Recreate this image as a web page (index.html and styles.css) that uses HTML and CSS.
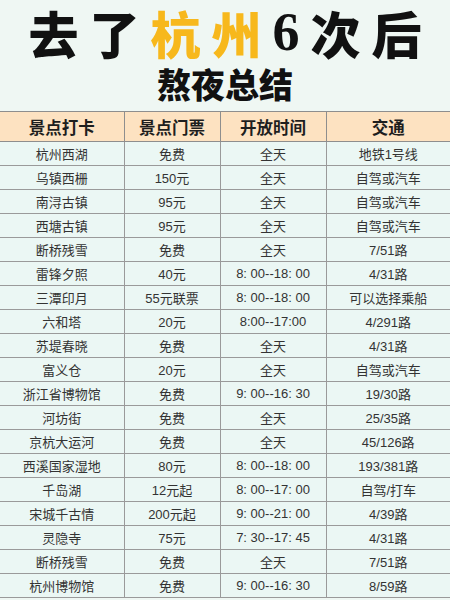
FILE: index.html
```html
<!DOCTYPE html>
<html lang="zh">
<head>
<meta charset="utf-8">
<link rel="stylesheet" href="styles.css">
</head>
<body>
<div class="page">
  <header class="title">
    <h1 class="line1"><span>去</span><span>了</span><span class="hl">杭</span><span class="hl">州</span><span class="num">6</span><span>次</span><span>后</span></h1>
    <h2 class="line2">熬夜总结</h2>
  </header>
  <table class="grid">
    <colgroup>
      <col class="c1"><col class="c2"><col class="c3"><col class="c4">
    </colgroup>
    <thead>
      <tr><th>景点打卡</th><th>景点门票</th><th>开放时间</th><th>交通</th></tr>
    </thead>
    <tbody>
      <tr><td>杭州西湖</td><td>免费</td><td>全天</td><td>地铁1号线</td></tr>
      <tr><td>乌镇西栅</td><td>150元</td><td>全天</td><td>自驾或汽车</td></tr>
      <tr><td>南浔古镇</td><td>95元</td><td>全天</td><td>自驾或汽车</td></tr>
      <tr><td>西塘古镇</td><td>95元</td><td>全天</td><td>自驾或汽车</td></tr>
      <tr><td>断桥残雪</td><td>免费</td><td>全天</td><td>7/51路</td></tr>
      <tr><td>雷锋夕照</td><td>40元</td><td>8: 00--18: 00</td><td>4/31路</td></tr>
      <tr><td>三潭印月</td><td>55元联票</td><td>8: 00--18: 00</td><td>可以选择乘船</td></tr>
      <tr><td>六和塔</td><td>20元</td><td>8:00--17:00</td><td>4/291路</td></tr>
      <tr><td>苏堤春晓</td><td>免费</td><td>全天</td><td>4/31路</td></tr>
      <tr><td>富义仓</td><td>20元</td><td>全天</td><td>自驾或汽车</td></tr>
      <tr><td>浙江省博物馆</td><td>免费</td><td>9: 00--16: 30</td><td>19/30路</td></tr>
      <tr><td>河坊街</td><td>免费</td><td>全天</td><td>25/35路</td></tr>
      <tr><td>京杭大运河</td><td>免费</td><td>全天</td><td>45/126路</td></tr>
      <tr><td>西溪国家湿地</td><td>80元</td><td>8: 00--18: 00</td><td>193/381路</td></tr>
      <tr><td>千岛湖</td><td>12元起</td><td>8: 00--17: 00</td><td>自驾/打车</td></tr>
      <tr><td>宋城千古情</td><td>200元起</td><td>9: 00--21: 00</td><td>4/39路</td></tr>
      <tr><td>灵隐寺</td><td>75元</td><td>7: 30--17: 45</td><td>4/31路</td></tr>
      <tr><td>断桥残雪</td><td>免费</td><td>全天</td><td>7/51路</td></tr>
      <tr><td>杭州博物馆</td><td>免费</td><td>9: 00--16: 30</td><td>8/59路</td></tr>
    </tbody>
  </table>
</div>
</body>
</html>
```

FILE: styles.css
```css
html, body {
  margin: 0;
  padding: 0;
  background: #eff7f3;
}
.page {
  width: 450px;
  height: 600px;
  overflow: hidden;
  font-family: "Noto Sans CJK SC", "Noto Sans", sans-serif;
}
.title {
  height: 111px;
  text-align: center;
}
.line1 {
  margin: 0;
  padding-top: 2px;
  height: 60px;
  display: flex;
  justify-content: center;
  align-items: center;
  gap: 11px;
  font-size: 50px;
  line-height: 60px;
  font-weight: 900;
  color: #111;
}
.hl {
  color: #f7b81c;
}
.num {
  font-family: "Liberation Serif", "DejaVu Serif", serif;
  font-weight: 700;
  font-size: 54px;
}
.line2 {
  margin: 0;
  font-size: 34px;
  line-height: 44px;
  font-weight: 900;
  color: #111;
}
.grid {
  width: 450px;
  border-collapse: collapse;
  table-layout: fixed;
  color: #333;
  font-family: "Liberation Sans", "Noto Sans CJK SC", sans-serif;
}
.c1 { width: 124px; }
.c2 { width: 96px; }
.c3 { width: 106px; }
.c4 { width: 124px; }
.grid th {
  height: 29px;
  padding: 0;
  background: #fde2c1;
  font-family: "Noto Sans CJK SC", "Noto Sans", sans-serif;
  font-size: 16.5px;
  font-weight: 700;
  color: #1e1e1e;
  border: 1px solid #8e8e8e;
}
.grid td {
  height: 23px;
  padding: 0;
  background: #ebf7f4;
  font-size: 13px;
  text-align: center;
  border: 1px solid #9a9a9a;
  white-space: nowrap;
}
.grid th:first-child, .grid td:first-child { border-left: none; }
.grid th:last-child, .grid td:last-child { border-right: none; }
```
